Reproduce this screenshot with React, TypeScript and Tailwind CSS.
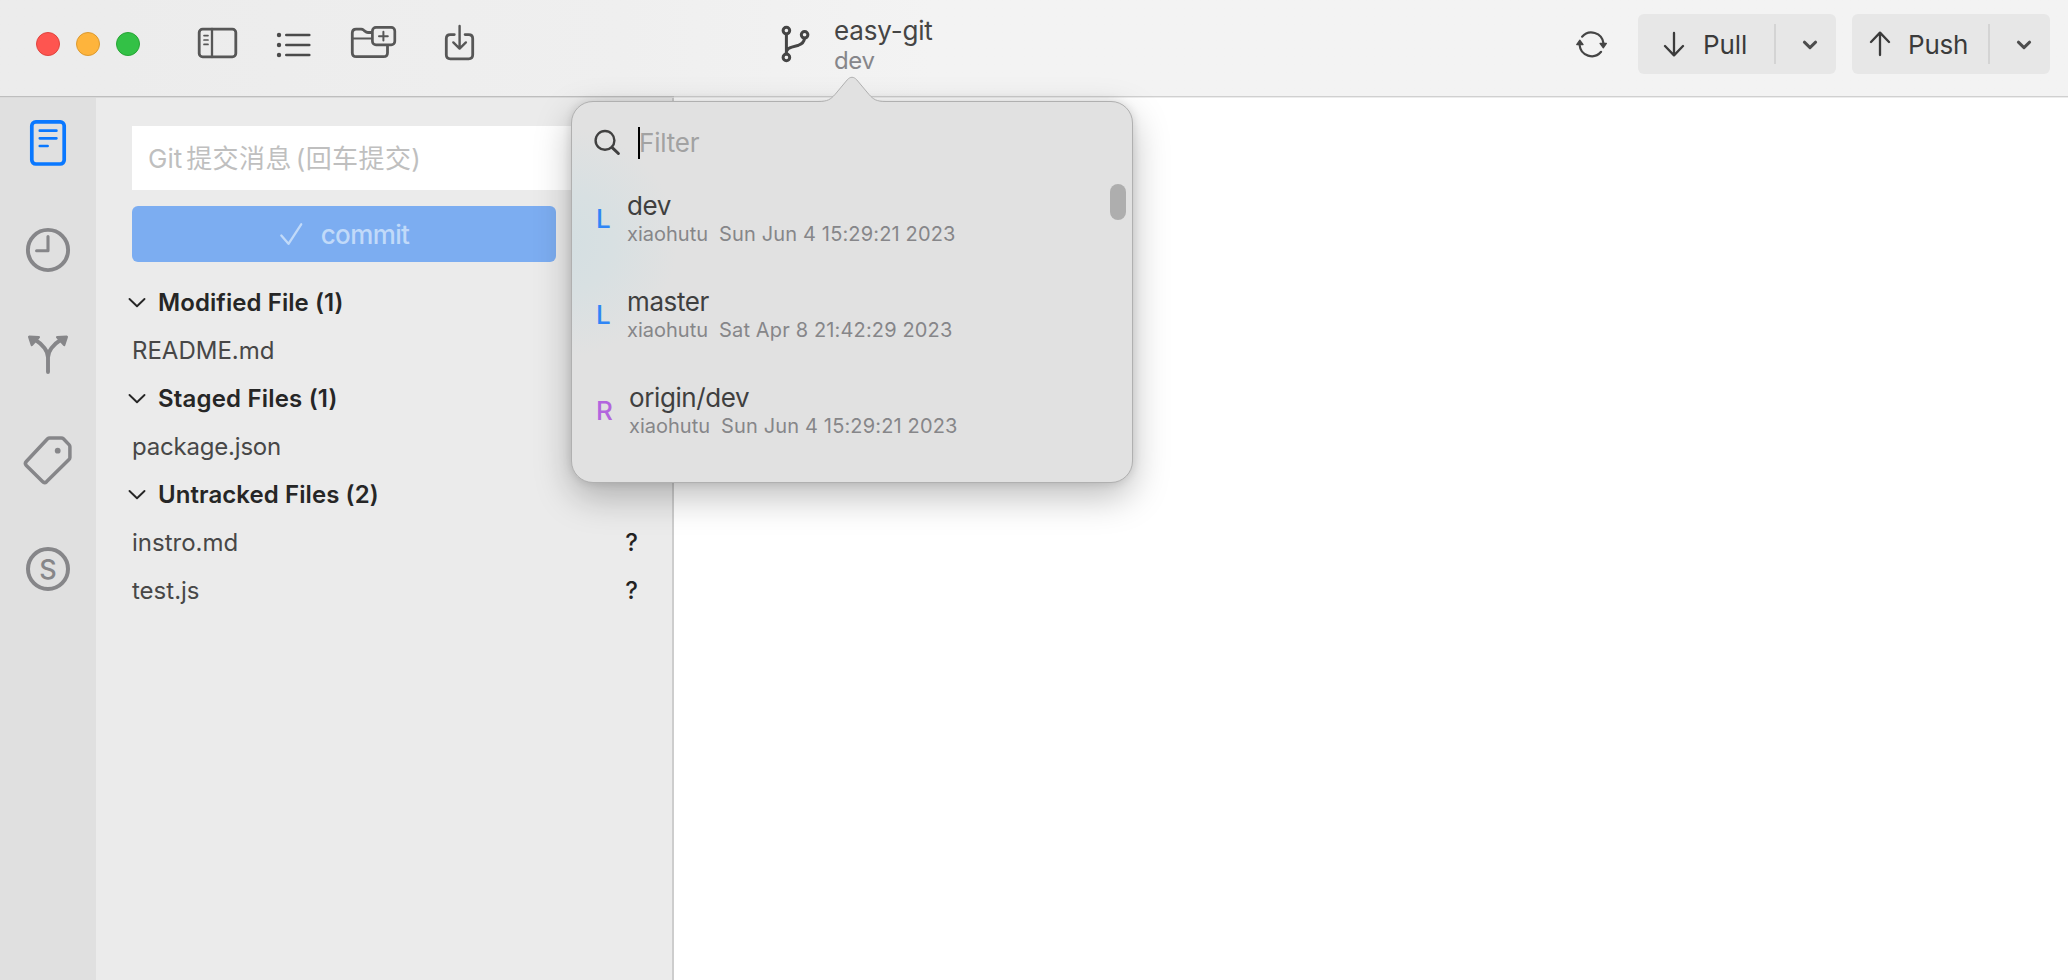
import React from "react";

type IconProps = { box: string; className: string; children: React.ReactNode };

function Icon({ box, className, children }: IconProps) {
  return (
    <svg viewBox={box} className={`shrink-0 ${className}`} fill="none" stroke="currentColor" strokeLinecap="round" strokeLinejoin="round">
      {children}
    </svg>
  );
}

function SyncButton({ label, up }: { label: string; up?: boolean }) {
  return (
    <div className="flex h-15 w-[198px] shrink-0 items-center rounded-md bg-[#e7e7e7] text-[#3b3b3b]">
      <div className={up ? "flex w-[136px] items-center pl-[17px]" : "flex w-[136px] items-center pl-[25px]"}>
        <Icon box="0 0 22 26" className="h-[26px] w-[22px]">
          {up ? (
            <path d="M11 24V2M2 11l9-9.4 9 9.4" strokeWidth="2.3" />
          ) : (
            <path d="M11 2v22M2 15l9 9.4L20 15" strokeWidth="2.3" />
          )}
        </Icon>
        <span className={up ? "ml-[17px] pt-0.5 text-[26px] leading-8 tracking-[-0.2px]" : "ml-[18px] pt-0.5 text-[26px] leading-8 tracking-[-0.1px]"}>{label}</span>
      </div>
      <div className="h-10 w-0.5 bg-[#d4d4d4]" />
      <Icon box="0 0 16 10" className="mt-px ml-[26px] h-2.5 w-4 text-[#4d4d4d]">
        <path d="M2.4 2.2 8 7.6l5.6-5.4" strokeWidth="3" />
      </Icon>
    </div>
  );
}

function Header() {
  return (
    <header className="flex h-[98px] shrink-0 flex-col bg-linear-to-r from-[#ececec] from-5% via-[#efefef] via-30% to-[#f3f3f3] to-45%">
      <div className="flex h-24 pr-[18px] pl-9">
        <div className="flex items-center gap-4 pb-2">
          <span className="size-6 rounded-full border border-[#e0443e] bg-[#fe5550]" />
          <span className="size-6 rounded-full border border-[#dc9a30] bg-[#feb43c]" />
          <span className="size-6 rounded-full border border-[#27a535] bg-[#33c146]" />
        </div>
        <div className="flex items-center pb-2 text-[#575757]">
          <Icon box="196 24 44 40" className="ml-14 h-10 w-11">
            <rect x="199.2" y="29.2" width="36.6" height="27.6" rx="3.4" strokeWidth="2.8" />
            <path d="M212 29v28" strokeWidth="2.3" />
            <path d="M204 35.6h4M204 40h4M204 44.4h4" strokeWidth="1.7" />
          </Icon>
          <Icon box="274 24 40 40" className="ml-[34px] h-10 w-10 text-[#4a4a4a]">
            <path d="M286.3 35h23M286.3 45h23M286.3 55h23" strokeWidth="2.6" />
            <g fill="currentColor" stroke="none">
              <circle cx="279" cy="35" r="2.2" />
              <circle cx="279" cy="45" r="2.2" />
              <circle cx="279" cy="55" r="2.2" />
            </g>
          </Icon>
          <Icon box="348 24 52 40" className="ml-[34px] h-10 w-[52px]">
            <path
              d="M371.5 32.5h-3.6c-1.2 0-2-.4-2.8-1.2l-1.6-1.3c-.7-.6-1.4-.8-2.4-.8h-4.9c-2.5 0-3.9 1.4-3.9 3.9v19.6c0 2.6 1.4 4 4 4h27.2c2.6 0 4-1.4 4-4v-6.5"
              strokeWidth="2.8"
            />
            <path d="M352.5 38.4H371" strokeWidth="2" />
            <rect x="372.4" y="27.3" width="22.4" height="17.6" rx="3.6" strokeWidth="2.7" />
            <path d="M383.4 31.8v8.8M379 36.2h8.8" strokeWidth="2" />
          </Icon>
          <Icon box="442 22 36 40" className="mt-[-4px] ml-[42px] h-10 w-9">
            <path d="M454.3 34.6h-4c-2.6 0-4 1.4-4 4v16.2c0 2.6 1.4 4 4 4h18.4c2.6 0 4-1.4 4-4V38.6c0-2.6-1.4-4-4-4h-3.6" strokeWidth="2.8" />
            <path d="M459.6 26v22.4M453.3 42.4l6.3 6.2 6.3-6.2" strokeWidth="2.4" />
          </Icon>
        </div>
        <Icon box="778 24 36 40" className="mt-6 ml-[300px] h-10 w-9 text-[#454545]">
          <g strokeWidth="3">
            <circle cx="786.4" cy="30.6" r="3.3" />
            <circle cx="804.6" cy="34.8" r="3.3" />
            <circle cx="786.4" cy="57.4" r="3.3" />
            <path d="M786.4 34v20M804.6 38.3c-.5 3.4-2.5 5.7-6 6.9l-6.8 1.9c-3 .8-4.6 1.9-5.2 4" />
          </g>
        </Icon>
        <div className="ml-5 flex flex-col pt-[15px] whitespace-nowrap">
          <span className="text-[26px] leading-[31px] tracking-[-0.17px] text-[#454545]">easy-git</span>
          <span className="text-2xl leading-[29px] tracking-[-0.4px] text-[#86868a]">dev</span>
        </div>
        <div className="ml-auto flex items-center pb-2">
          <Icon box="1574 24 36 40" className="h-10 w-9 text-[#454545]">
            <path d="M1582.1 36.7a12.2 12.2 0 0 1 21.3 6.3M1601.1 51.8a12.2 12.2 0 0 1-21.5-6.8" strokeWidth="2.2" />
            <path d="M1600 43.4h6.4l-3.1 4.4zM1576.7 44.6h6.4l-3.3-4.4z" fill="currentColor" strokeWidth="1.2" />
          </Icon>
          <div className="ml-7 flex gap-4">
            <SyncButton label="Pull" />
            <SyncButton label="Push" up />
          </div>
        </div>
      </div>
      <div className="flex h-px">
        <div className="w-[674px] bg-[#bebebe]" />
        <div className="flex-1 bg-[#d0d0d0]" />
      </div>
      <div className="flex h-px">
        <div className="w-[674px] bg-[#dadada]" />
        <div className="flex-1 bg-[#ececec]" />
      </div>
    </header>
  );
}

function Rail() {
  return (
    <nav className="flex w-24 shrink-0 flex-col bg-[#e0e0e0] text-[#868689]">
      <Icon box="0 97.6 96 98" className="h-[98px] w-24 text-[#0a78ff]">
        <rect x="31.8" y="121.4" width="32.4" height="42.2" rx="4" strokeWidth="3.7" />
        <path d="M39.8 130.3h16.6M39.8 137.9h16.6M39.8 145.6h7.8" strokeWidth="2.7" />
      </Icon>
      <Icon box="0 194 96 104" className="h-[104px] w-24">
        <circle cx="48" cy="248" r="20.1" strokeWidth="3.9" />
        <path d="M48 234.6v14.2H36.6" strokeWidth="3.1" />
      </Icon>
      <Icon box="0 300 96 104" className="h-[104px] w-24">
        <path d="M48 372v-14.5c0-6-5-13-12.5-17.5M48 357.5c0-6 5-13 12.5-17.5" strokeWidth="3.9" />
        <path d="M29.2 336.8l9.6.4-7 7.8zM66.8 336.8l-9.6.4 7 7.8z" fill="currentColor" strokeWidth="2.4" />
      </Icon>
      <Icon box="0 398.8 96 104" className="h-[104px] w-24">
        <path
          d="M49.8 432.7h11.4c.9 0 1.6.3 2.2.9l5.6 5.8c.6.6.9 1.3.9 2.2v10.6c0 .9-.3 1.6-.9 2.2l-22.3 22c-1.4 1.3-2.9 1.3-4.2 0L26.3 460.3c-1.2-1.3-1.2-2.700 0-4l21.300-22.700c.6-.6 1.300-.9 2.200-.9z"
          strokeWidth="3.5"
        />
        <circle cx="57.7" cy="445.5" r="2.9" fill="currentColor" stroke="none" />
      </Icon>
      <div className="mt-[39px] flex size-11 items-center justify-center self-center rounded-full border-4 border-[#868689] text-[27px] leading-none font-medium">S</div>
    </nav>
  );
}

function Group({ title, files, spacing }: { title: string; files: [string, string][]; spacing: string }) {
  return (
    <section>
      <div className="flex h-12 items-center">
        <Icon box="0 0 18 12" className="-ml-1 h-3 w-[18px] text-[#262626]">
          <path d="M1.5 2 9 9.2 16.5 2" strokeWidth="1.9" />
        </Icon>
        <h2 className={`ml-3 text-2xl font-semibold text-[#262626] ${spacing}`}>{title}</h2>
      </div>
      {files.map(([name, status]) => (
        <div key={name} className="flex h-12 items-center justify-between pr-0.5 text-2xl text-[#474747]">
          <span className={name === "package.json" ? "tracking-[-0.2px]" : "tracking-normal"}>{name}</span>
          <span className="font-medium text-[#222222]">{status}</span>
        </div>
      ))}
    </section>
  );
}

function Sidebar() {
  return (
    <aside className="flex w-[578px] shrink-0 flex-col border-r-2 border-[#cdcdcd] bg-[#ebebeb] pt-7 pr-8 pl-9 whitespace-nowrap">
      <div className="flex h-16 items-center bg-white px-4 font-['Inter','Noto_Sans_CJK_SC',sans-serif] text-[26px] text-[#bfbfbf]">
        <span>Git</span>
        <span className="ml-1 tracking-[0.4px]">提交消息</span>
        <span className="ml-1 tracking-[0.4px]">(回车提交)</span>
      </div>
      <button className="mt-4 flex h-14 w-[424px] items-center justify-center rounded-md bg-[#7cadf1] text-[26px] text-[#c1daf9]">
        <Icon box="0 0 24 24" className="h-6 w-6">
          <path d="M2.3 13.5l7.2 8.3L22.2 2.3" strokeWidth="2.3" />
        </Icon>
        <span className="ml-[18px] font-medium tracking-[-0.6px]">commit</span>
      </button>
      <div className="mt-[17px]">
        <Group title="Modified File (1)" files={[["README.md", ""]]} spacing="tracking-[0.08px]" />
        <Group title="Staged Files (1)" files={[["package.json", ""]]} spacing="tracking-[0.18px]" />
        <Group title="Untracked Files (2)" files={[["instro.md", "?"], ["test.js", "?"]]} spacing="tracking-[0.08px]" />
      </div>
    </aside>
  );
}

type Branch = { kind: "L" | "R"; name: string; author: string; date: string };

const branches: Branch[] = [
  { kind: "L", name: "dev", author: "xiaohutu", date: "Sun Jun 4 15:29:21 2023" },
  { kind: "L", name: "master", author: "xiaohutu", date: "Sat Apr 8 21:42:29 2023" },
  { kind: "R", name: "origin/dev", author: "xiaohutu", date: "Sun Jun 4 15:29:21 2023" },
];

function BranchPopover() {
  return (
    <div className="absolute top-[101px] left-[571px] h-[382px] w-[562px] rounded-[22px] border border-[#b0b0b0] bg-[#e1e1e1] bg-[radial-gradient(circle_at_-10px_140px,#d4dfe2_0,#d8e0e2_50px,#e1e1e1_115px)] shadow-[0_14px_36px_rgba(0,0,0,0.26),0_0_10px_rgba(0,0,0,0.12)]">
      <svg viewBox="816 74 72 28" className="absolute top-[-28px] left-[244px] h-7 w-[72px]">
        <path
          d="M818 101.5c10 0 12.5-2.2 17-7l12.2-14.6c3.2-3.5 6.4-3.5 9.6 0L869 94.5c4.5 4.8 7 7 17 7V102H818z"
          fill="#e1e1e1"
        />
        <path
          d="M818 101.5c10 0 12.5-2.2 17-7l12.2-14.6c3.2-3.5 6.4-3.5 9.6 0L869 94.5c4.5 4.8 7 7 17 7"
          fill="none"
          stroke="#b0b0b0"
        />
      </svg>
      <div className="relative flex h-full flex-col">
        <div className="mt-[22px] flex h-9 items-center pl-5">
          <Icon box="592 124 32 36" className="h-9 w-8 text-[#404040]">
            <circle cx="605" cy="140.4" r="9.4" strokeWidth="2.4" />
            <path d="M612.2 147.6l6.2 5.9" strokeWidth="3" />
          </Icon>
          <span className="mt-0.5 ml-3.5 h-8 w-0.5 bg-black" />
          <span className="-ml-px text-[26px] tracking-[-0.2px] text-[#a2a2a2]">Filter</span>
        </div>
        <div className="flex">
          <ul className="mt-[30px] flex flex-1 flex-col gap-[39px] pl-6 whitespace-nowrap">
            {branches.map((b) => (
              <li key={b.name} className="flex h-[57px] items-center">
                <span className={b.kind === "L" ? "w-[31px] text-[26px] font-medium text-[#2f86f6]" : "w-[33px] text-[26px] font-medium text-[#b265de]"}>{b.kind}</span>
                <div className="flex flex-col">
                  <span className="text-[26px] leading-[31px] tracking-[-0.4px] text-[#3f3f3f]">{b.name}</span>
                  <span className="flex gap-[11px] text-xl leading-[26px] text-[#868689]">
                    <span>{b.author}</span>
                    <span className="tracking-[0.15px]">{b.date}</span>
                  </span>
                </div>
              </li>
            ))}
          </ul>
          <div className="mt-6 mr-1.5 h-9 w-4 rounded-full bg-[#aeaeae]" />
        </div>
      </div>
    </div>
  );
}

export default function App() {
  return (
    <div className="relative flex h-[980px] w-[2068px] flex-col overflow-hidden bg-white font-['Inter',sans-serif]">
      <Header />
      <div className="flex min-h-0 flex-1">
        <Rail />
        <Sidebar />
        <main className="flex-1 bg-white" />
      </div>
      <BranchPopover />
    </div>
  );
}
